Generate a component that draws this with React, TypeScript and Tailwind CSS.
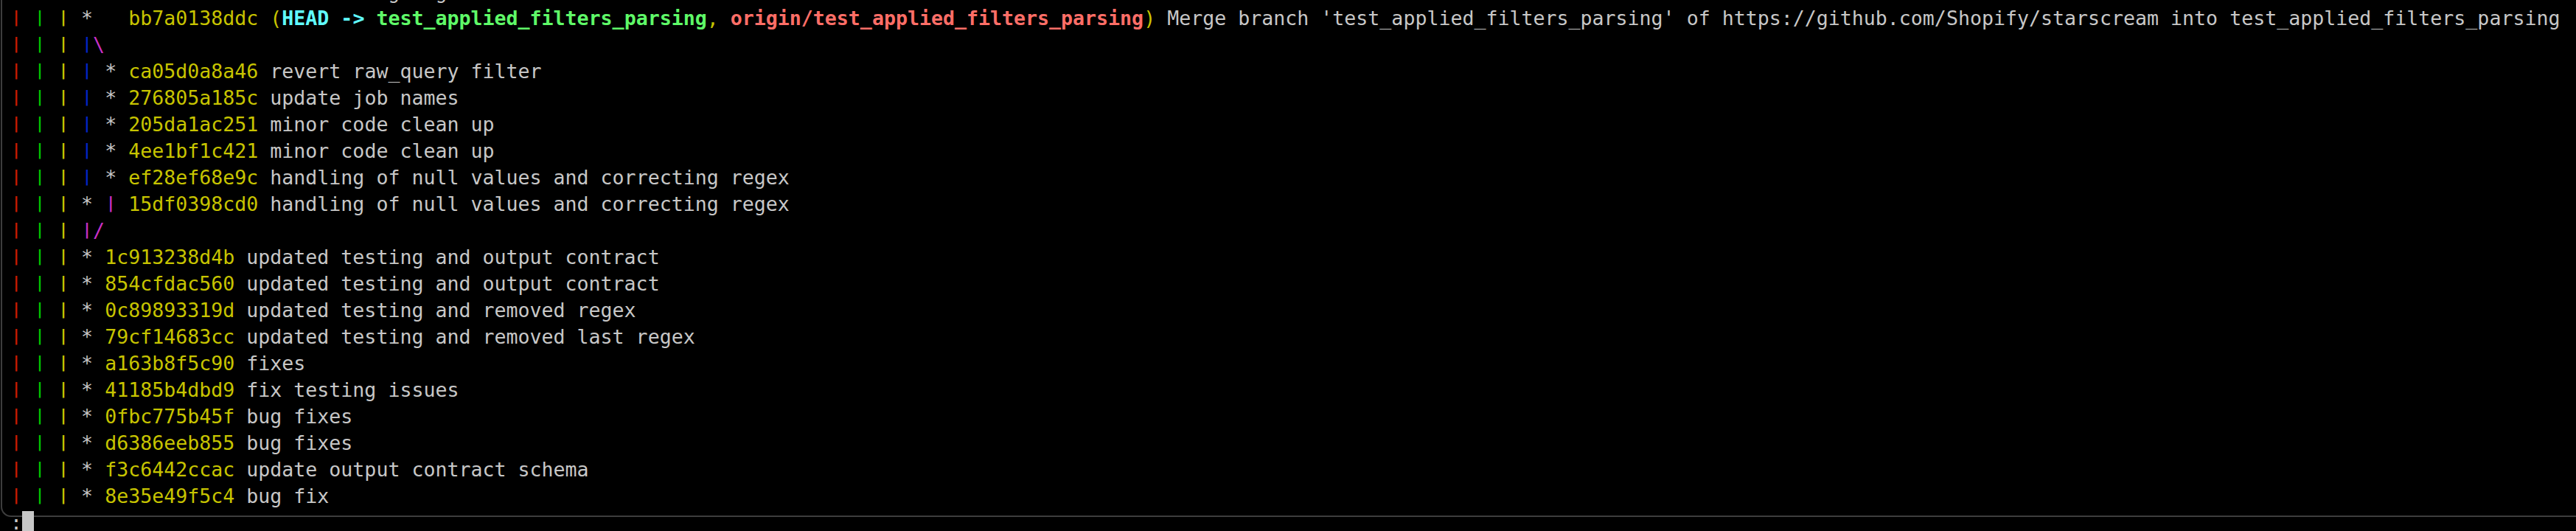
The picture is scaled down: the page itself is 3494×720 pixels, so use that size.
import React from "react"

type Seg = [string, string]

const red = "text-[#c91b00]"
const green = "text-[#00c200]"
const yellow = "text-[#c7c400]"
const blue = "text-[#0225c7]"
const magenta = "text-[#c930c7]"
const gray = "text-[#c7c7c7]"
const head = "text-[#60fdff] font-bold"
const branch = "text-[#5ffa68] font-bold"
const remote = "text-[#ff6e67] font-bold"

// menlo's bar stops at the baseline, dejavu's drops below it
const bar = "inline-block origin-[50%_7px] scale-y-[0.8]"

const rails: Seg[] = [
  ["|", red],
  [" ", gray],
  ["|", green],
  [" ", gray],
  ["|", yellow],
  [" ", gray],
]

function commit(hash: string, msg: string): Seg[] {
  return [
    [hash, yellow],
    [" " + msg, gray],
  ]
}

function sideBranch(hash: string, msg: string): Seg[] {
  return [...rails, ["|", blue], [" ", gray], ["*", gray], [" ", gray], ...commit(hash, msg)]
}

function mainLine(hash: string, msg: string): Seg[] {
  return [...rails, ["*", gray], [" ", gray], ...commit(hash, msg)]
}

const lines: Seg[][] = [
  // only the descenders of this line peek in at the top
  [["                      ", gray], ["Fixed a big bug", gray]],
  [
    ...rails,
    ["*", gray],
    ["   ", gray],
    ["bb7a0138ddc", yellow],
    [" (", yellow],
    ["HEAD ->", head],
    [" ", yellow],
    ["test_applied_filters_parsing", branch],
    [", ", yellow],
    ["origin/test_applied_filters_parsing", remote],
    [")", yellow],
    [
      " Merge branch 'test_applied_filters_parsing' of https://github.com/Shopify/starscream into test_applied_filters_parsing",
      gray,
    ],
  ],
  [...rails, ["|", blue], ["\\", magenta]],
  sideBranch("ca05d0a8a46", "revert raw_query filter"),
  sideBranch("276805a185c", "update job names"),
  sideBranch("205da1ac251", "minor code clean up"),
  sideBranch("4ee1bf1c421", "minor code clean up"),
  sideBranch("ef28ef68e9c", "handling of null values and correcting regex"),
  [...rails, ["*", gray], [" ", gray], ["|", magenta], [" ", gray], ...commit("15df0398cd0", "handling of null values and correcting regex")],
  [...rails, ["|", magenta], ["/", magenta]],
  mainLine("1c913238d4b", "updated testing and output contract"),
  mainLine("854cfdac560", "updated testing and output contract"),
  mainLine("0c89893319d", "updated testing and removed regex"),
  mainLine("79cf14683cc", "updated testing and removed last regex"),
  mainLine("a163b8f5c90", "fixes"),
  mainLine("41185b4dbd9", "fix testing issues"),
  mainLine("0fbc775b45f", "bug fixes"),
  mainLine("d6386eeb855", "bug fixes"),
  mainLine("f3c6442ccac", "update output contract schema"),
  mainLine("8e35e49f5c4", "bug fix"),
]

export default function App() {
  return (
    <div className="h-[720px] w-full overflow-hidden bg-black">
      <div className="ml-[1px] h-[730px] rounded-bl-[14px] border-b-2 border-l-2 border-[#3d3d3d] pl-[11px]">
        <div className="-mt-[29px] whitespace-pre font-['DejaVu_Sans_Mono',monospace] text-[26.6px] leading-[36px]">
          {lines.map((segs, i) => (
            <div key={i}>
              {segs.map(([t, c], j) => (
                <span key={j} className={t === "|" ? `${c} ${bar}` : c}>
                  {t}
                </span>
              ))}
            </div>
          ))}
          <div className={gray}>
            :<span className="bg-[#c7c7c7]"> </span>
          </div>
        </div>
      </div>
    </div>
  )
}
